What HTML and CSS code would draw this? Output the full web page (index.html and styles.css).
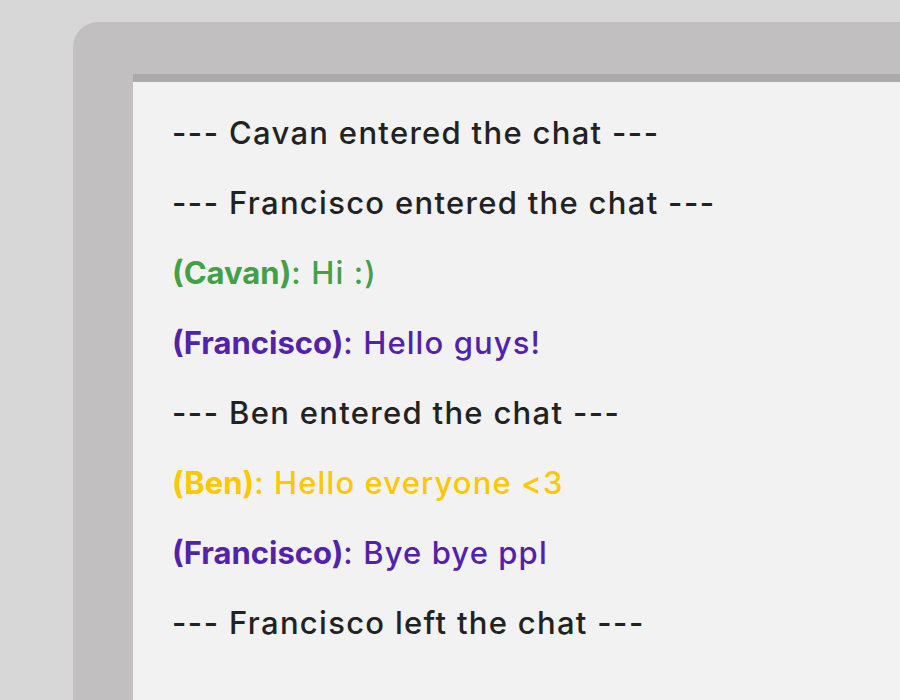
FILE: index.html
```html
<!DOCTYPE html>
<html lang="en">
<head>
<meta charset="utf-8">
<title>Chat</title>
<link rel="stylesheet" href="styles.css">
</head>
<body>
<div class="window">
  <div class="chat">
    <p class="line system"><span class="dash">---</span> Cavan entered the chat <span class="dash">---</span></p>
    <p class="line system"><span class="dash">---</span> Francisco entered the chat <span class="dash">---</span></p>
    <p class="line green"><b class="name">(Cavan)</b><span class="msg">: Hi :)</span></p>
    <p class="line purple"><b class="name">(Francisco)</b><span class="msg">: Hello guys!</span></p>
    <p class="line system"><span class="dash">---</span> Ben entered the chat <span class="dash">---</span></p>
    <p class="line yellow"><b class="name">(Ben)</b><span class="msg">: Hello everyone &lt;3</span></p>
    <p class="line purple"><b class="name">(Francisco)</b><span class="msg">: Bye bye ppl</span></p>
    <p class="line system"><span class="dash">---</span> Francisco left the chat <span class="dash">---</span></p>
  </div>
</div>
</body>
</html>
```
FILE: styles.css
```css
html, body {
  margin: 0;
  height: 100%;
  overflow: hidden;
}
body {
  background: #d7d7d7;
  padding: 22px 0 0 73px;
  box-sizing: border-box;
  font-family: "Inter", "DejaVu Sans", sans-serif;
}
.window {
  background: #c1bfbf;
  border-top-left-radius: 25px;
  padding: 52px 0 0 60px;
  height: 100%;
  box-sizing: border-box;
}
.chat {
  background: #f2f2f2;
  border-top: 8px solid #aaaaaa;
  height: 100%;
  box-sizing: border-box;
  padding: 16px 0 0 39px;
}
.line {
  margin: 0;
  font-size: 31px;
  line-height: 70px;
  font-weight: 500;
  white-space: nowrap;
}
.system {
  color: #222222;
  letter-spacing: 1.3px;
}
.dash {
  letter-spacing: 1.5px;
}
.name {
  font-weight: 700;
  letter-spacing: 0;
}
.msg {
  letter-spacing: 1.1px;
}
.green { color: #43a047; }
.purple { color: #5223a8; }
.yellow { color: #fdc800; }
```
